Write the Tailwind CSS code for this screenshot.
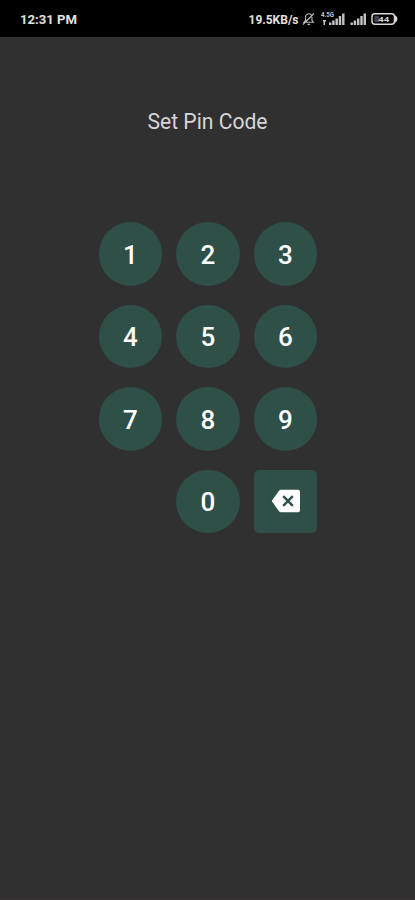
<!DOCTYPE html>
<html lang="en">
<head>
<meta charset="utf-8">
<title>Set Pin Code</title>
<script src="https://cdn.jsdelivr.net/npm/@tailwindcss/browser@4"></script>
</head>
<body class="bg-[#303030] font-[Roboto,sans-serif]">
<div class="w-[415px] h-[900px] flex flex-col overflow-hidden bg-[#303030] border-b border-[#3a3036]">
  <header class="h-[37px] shrink-0 bg-black flex items-center justify-between pl-5 pr-[17px] pt-[1px] text-[#e0e0e0]">
    <svg class="w-[58px] h-4" viewBox="0 0 58 16"><text x="0" y="12.800" textLength="57" lengthAdjust="spacingAndGlyphs" font-size="12.5" font-weight="700" fill="currentColor">12:31 PM</text></svg>
    <div class="flex items-center">
      <svg class="w-[51px] h-4 mr-[3px]" viewBox="0 0 51 16"><text x="0.500" y="12.800" textLength="50" lengthAdjust="spacingAndGlyphs" font-size="12" font-weight="700" fill="currentColor">19.5KB/s</text></svg>
      <svg class="w-[13px] h-[14px] mr-[6px]" viewBox="0 0 13 14" fill="none" stroke="#bdbdbd" stroke-width="1.1"><path d="M2 10.200h9.500L10 8.500V5a3.200 3.200 0 0 0-6.400 0v3.500zM5.500 12.400h2.600M1 12.500L12 1.500"/></svg>
      <svg class="w-[24px] h-[14px] mr-[5px]" viewBox="0 0 24 14" fill="#c4c4c4"><text x="0" y="5.200" font-size="6.500" font-weight="700" textLength="13" lengthAdjust="spacingAndGlyphs">4.5G</text><path d="M2 8h3v1.500H4V13H2.500V9.500H2zM8 10.500h2.400V13H8zM11.200 8.500h2.400V13h-2.400zM14.500 6.500h2.400V13h-2.400zM17.800 4h2.400v9h-2.400zM21.100 1.500h2.400V13h-2.400z"/></svg>
      <svg class="w-[17px] h-[14px] mr-[4px]" viewBox="0 0 17 14" fill="#c4c4c4"><path d="M.5 10.500h2.400V13H.5zM3.700 8.500h2.400V13H3.700zM7 6.500h2.400V13H7zM10.300 4h2.400v9h-2.400zM13.600 1.500H16V13h-2.400z"/></svg>
      <svg class="w-[27px] h-[14px]" viewBox="0 0 27 14"><rect x="1" y="1.700" width="22.500" height="10.600" rx="3" fill="none" stroke="#d8d8d8" stroke-width="1.500"/><path d="M24 3.200q2.500 1 2.500 3.800t-2.500 3.800z" fill="#d8d8d8"/><rect x="3.300" y="3.800" width="5" height="6.400" rx="1" fill="#444"/><text x="7.200" y="9.900" font-size="8" font-weight="700" textLength="11" lengthAdjust="spacingAndGlyphs" fill="#cfcfcf">44</text></svg>
    </div>
  </header>
  <main class="flex flex-col items-center pl-[1px]">
    <h1 class="mt-[69px] h-7 leading-7 text-[21px] text-[#d6d6d6] whitespace-nowrap"><svg class="w-[126px] h-7" viewBox="0 0 126 28"><text x="2.500" y="22.500" font-size="21.500" textLength="120" lengthAdjust="spacingAndGlyphs" fill="currentColor">Set Pin Code</text></svg></h1>
    <div class="mt-[88px] grid grid-cols-[repeat(3,63.5px)] auto-rows-[63.5px] gap-x-[14px] gap-y-[19px] text-white text-[26px] leading-none font-medium [&>button]:bg-[#2f4f49] [&>button]:flex [&>button]:items-center [&>button]:justify-center [&>button]:pt-[2px]">
      <button class="rounded-full">1</button>
      <button class="rounded-full">2</button>
      <button class="rounded-full">3</button>
      <button class="rounded-full">4</button>
      <button class="rounded-full">5</button>
      <button class="rounded-full">6</button>
      <button class="rounded-full">7</button>
      <button class="rounded-full">8</button>
      <button class="rounded-full">9</button>
      <button class="rounded-full col-start-2">0</button>
      <button class="rounded-[5px]" aria-label="Delete">
        <svg class="w-[30px] h-[24px] -mt-[3px]" viewBox="0 0 30 24"><path fill="#fff" d="M10 .8h17a2 2 0 0 1 2 2v18.400a2 2 0 0 1-2 2H10q-1.300 0-2.200-1.200L.7 12 7.800 2Q8.700.8 10 .8z"/><path d="M12.200 7.200l9.600 9.600M21.800 7.200l-9.600 9.600" stroke="#2f4f49" stroke-width="2.400"/></svg>
      </button>
    </div>
  </main>
</div>
</body>
</html>
